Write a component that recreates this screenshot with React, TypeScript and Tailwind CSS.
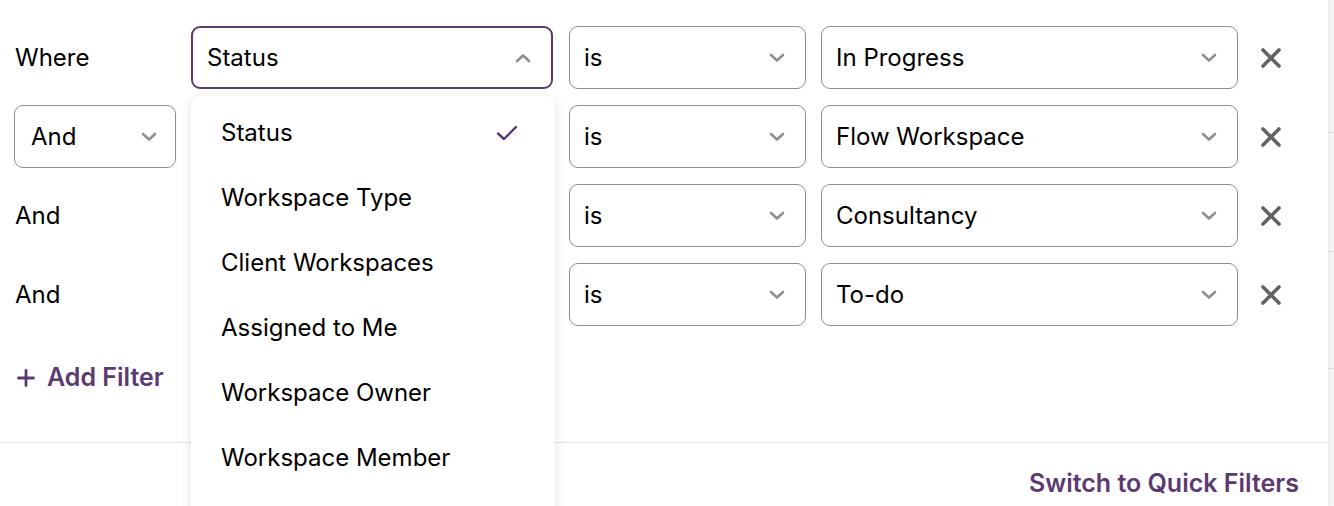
import React from 'react';

const PURPLE = '#5b3a72';

const Chevron = ({ up = false }: { up?: boolean }) => (
  <svg width="16" height="10" viewBox="0 0 16 10" className="shrink-0">
    <path
      d={up ? 'M2 8 L8 2.5 L14 8' : 'M2 2 L8 7.5 L14 2'}
      fill="none"
      stroke="#8e8e93"
      strokeWidth="2.6"
      strokeLinecap="round"
      strokeLinejoin="round"
    />
  </svg>
);

const CloseIcon = () => (
  <svg width="22" height="22" viewBox="0 0 22 22">
    <path d="M3 3 L19 19 M19 3 L3 19" stroke="#636366" strokeWidth="3.6" strokeLinecap="round" />
  </svg>
);

const Select = ({ value, className = '', pad = 'pl-[14px] pr-[20px]' }: { value: string; className?: string; pad?: string }) => (
  <div
    className={`h-[63px] flex items-center justify-between rounded-[9px] border border-[#8e8e93] bg-white ${pad} ${className}`}
  >
    <span className="text-[24px] text-black leading-none">{value}</span>
    <Chevron />
  </div>
);

const menuItems = ['Status', 'Workspace Type', 'Client Workspaces', 'Assigned to Me', 'Workspace Owner', 'Workspace Member'];

const rows = [
  { join: 'Where', joinSelect: false, value: 'In Progress' },
  { join: 'And', joinSelect: true, value: 'Flow Workspace' },
  { join: 'And', joinSelect: false, value: 'Consultancy' },
  { join: 'And', joinSelect: false, value: 'To-do' },
];

export default function App() {
  return (
    <div className="w-[1334px] h-[506px] overflow-hidden flex bg-white" style={{ fontFamily: 'Inter, "Noto Sans", sans-serif' }}>
      <div className="w-[1328px] h-full flex flex-col shrink-0 shadow-[1px_0_3px_rgba(0,0,0,0.06)] relative z-10 bg-white">
        {/* filter rows */}
        <div className="pt-[26px] pl-[14px] flex flex-col gap-[16px]">
          {rows.map((row, i) => (
            <div key={i} className="flex items-center">
              <div className="w-[162px] shrink-0">
                {row.joinSelect ? (
                  <Select value={row.join} className="w-[162px]" pad="pl-[16px] pr-[18px]" />
                ) : (
                  <span className="pl-[1px] text-[24px] text-black">{row.join}</span>
                )}
              </div>
              <div className="w-[362px] ml-[15px] shrink-0 relative">
                {i === 0 && (
                  <>
                    <div className="h-[63px] flex items-center justify-between rounded-[9px] border-2 border-[#5b3a72] bg-white pl-[14px] pr-[20px]">
                      <span className="text-[24px] text-black leading-none">Status</span>
                      <Chevron up />
                    </div>
                    {/* open dropdown */}
                    <div className="absolute left-0 top-[70px] w-[364px] h-[440px] bg-white rounded-[10px] shadow-[0_2px_12px_rgba(0,0,0,0.12)] z-20 pt-[4px]">
                      {menuItems.map((item, j) => (
                        <div key={item} className="h-[65px] flex items-center justify-between pl-[30px] pr-[36px]">
                          <span className="text-[24px] text-black">{item}</span>
                          {j === 0 && (
                            <svg width="24" height="18" viewBox="0 0 24 18">
                              <path d="M3 9.5 L9 15 L21 3" fill="none" stroke={PURPLE} strokeWidth="2.4" strokeLinecap="round" strokeLinejoin="round" />
                            </svg>
                          )}
                        </div>
                      ))}
                    </div>
                  </>
                )}
              </div>
              <Select value="is" className="w-[237px] ml-[16px] shrink-0" />
              <Select value={row.value} className="w-[417px] ml-[15px] shrink-0" />
              <div className="ml-[22px] flex items-center">
                <CloseIcon />
              </div>
            </div>
          ))}
        </div>

        {/* add filter */}
        <div className="mt-[34px] h-[36px] pl-[17px] flex items-center gap-[12px] font-semibold" style={{ color: PURPLE }}>
          <svg width="18" height="18" viewBox="0 0 18 18">
            <path d="M9 1.5 V16.5 M1.5 9 H16.5" stroke={PURPLE} strokeWidth="2.8" strokeLinecap="round" />
          </svg>
          <span className="text-[25px]">Add Filter</span>
        </div>

        {/* footer */}
        <div className="mt-[46px] border-t border-[#e3e3e6] flex-1 flex justify-end items-start pt-[22px] pr-[29px]">
          <span className="text-[25px] font-semibold" style={{ color: PURPLE }}>Switch to Quick Filters</span>
        </div>
      </div>

      {/* table behind the panel */}
      <div className="flex-1 bg-[#f4f4f5] flex flex-col">
        <div className="h-[133px] border-b border-[#dedede]" />
        <div className="h-[119px] border-b border-[#dedede]" />
        <div className="h-[117px] border-b border-[#dedede]" />
      </div>
    </div>
  );
}
